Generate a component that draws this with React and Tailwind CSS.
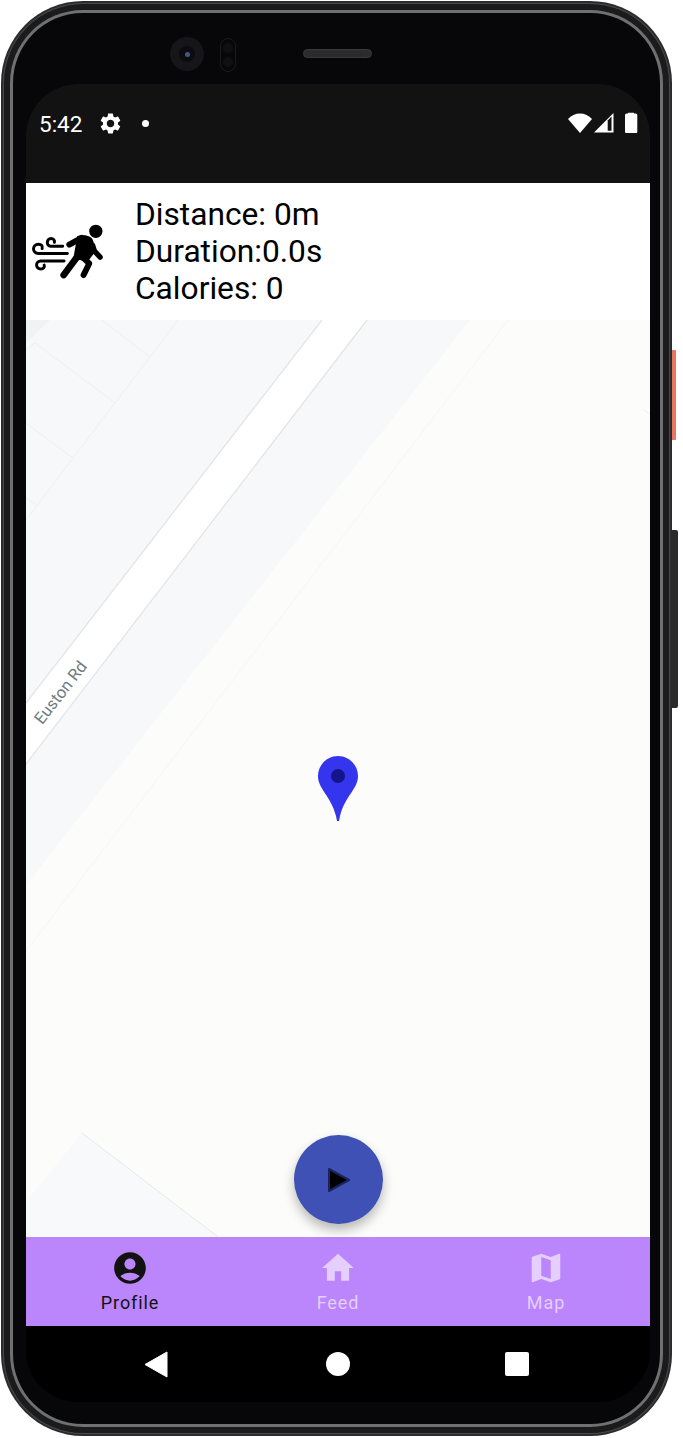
import React from 'react';
import { MdAccountCircle, MdHome, MdMap, MdSettings } from 'react-icons/md';

const navItems = [
  { label: 'Profile', Icon: MdAccountCircle, active: true },
  { label: 'Feed', Icon: MdHome },
  { label: 'Map', Icon: MdMap },
];

const RunnerIcon = () => (
  <svg width="75" height="58" viewBox="30 80 225 175" className="block text-black">
    <circle cx="228" cy="108" r="20" fill="currentColor" />
    {/* body */}
    <path d="M148 148 L185 128" fill="none" stroke="currentColor" strokeWidth="18" strokeLinecap="round" />
    <path d="M172 122 C197 116 218 122 221 140 L226 170 L203 200 L160 190 Z" fill="currentColor" />
    <path d="M218 150 L224 168 L241 186" fill="none" stroke="currentColor" strokeWidth="16" strokeLinecap="round" strokeLinejoin="round" />
    <path d="M172 185 L131 240" fill="none" stroke="currentColor" strokeWidth="20" strokeLinecap="round" />
    <path d="M187 185 L208 205 L191 240" fill="none" stroke="currentColor" strokeWidth="18" strokeLinecap="round" strokeLinejoin="round" />
    {/* wind */}
    <path d="M128 153 H92 C78 153 78 130 93 130 C100 130 105 135 103 141" fill="none" stroke="currentColor" strokeWidth="9" strokeLinecap="round" />
    <path d="M142 175 H55 C35 175 35 147 55 147 C63 147 68 152 66 160" fill="none" stroke="currentColor" strokeWidth="9" strokeLinecap="round" />
    <path d="M132 198 H62 C45 198 45 222 62 222 C70 222 74 216 72 210" fill="none" stroke="currentColor" strokeWidth="9" strokeLinecap="round" />
  </svg>
);

const MapLayer = () => (
  <svg width="624" height="917" viewBox="0 0 624 917" className="block">
    <rect width="624" height="917" fill="#fcfcfa" />
    {/* city block along the road */}
    <polygon points="0,0 444,0 0,565" fill="#f7f8fa" />
    <polygon points="0,0 24,0 0,23" fill="#f1f2f4" />
    <polygon points="296,0 341,0 0,444 0,383" fill="#ffffff" />
    <line x1="296" y1="0" x2="0" y2="383" stroke="#e3e4e6" strokeWidth="1.3" />
    <line x1="341" y1="0" x2="0" y2="444" stroke="#e3e4e6" strokeWidth="1.3" />
    <line x1="482" y1="0" x2="0" y2="631" stroke="#f6f6f1" strokeWidth="1" />
    {/* building outlines */}
    <g stroke="#eceded" strokeWidth="0.8">
      <line x1="152" y1="0" x2="0" y2="200" />
      <line x1="76" y1="0" x2="124" y2="37" />
      <line x1="9" y1="23" x2="89" y2="83" />
      <line x1="0" y1="103" x2="47" y2="138" />
      <line x1="0" y1="178" x2="11" y2="185" />
      <line x1="0" y1="30" x2="9" y2="23" />
      <line x1="618" y1="90" x2="624" y2="94" />
    </g>
    <polygon points="56,813 0,882 0,917 192,917" fill="#f8f9fb" />
    <line x1="56" y1="813" x2="192" y2="917" stroke="#e2e3e3" strokeWidth="0.8" />
    <text
      x="39"
      y="376"
      textAnchor="middle"
      transform="rotate(-52 39 376)"
      fill="#6f7a82"
      fontSize="16.5"
      fontFamily="Roboto, sans-serif"
    >
      Euston Rd
    </text>
  </svg>
);

const StatusBar = () => (
  <div className="h-[99px] shrink-0 bg-[#121212] pt-[26px] pl-[13px] pr-[12px] flex items-start justify-between text-white">
    <div className="flex items-center h-[26px]">
      <span className="text-[22.5px] leading-[26px] w-[59px] translate-y-[1px]">5:42</span>
      <MdSettings size={25} className="-ml-[0.5px]" />
      <span className="ml-[19px] w-[7px] h-[7px] rounded-full bg-white" />
    </div>
    <div className="flex items-center h-[26px]">
      <svg width="76" height="24" viewBox="0 0 76 24">
        <path d="M6 8 C12 0.500 24 0.500 30 8 L18 22 Z" fill="#fff" />
        <path d="M51.500 2 V21.500 H32 Z" fill="#fff" />
        <path d="M45.700 9.500 L49.500 5.500 V19.700 H45.700 Z" fill="#121212" />
        <path d="M63 4 a1.500 1.500 0 0 1 1.500 -1.500 H66 V1.700 H72 V2.500 H73.800 a1.500 1.500 0 0 1 1.500 1.500 V21 a1 1 0 0 1 -1 1 H64 a1 1 0 0 1 -1 -1 Z" fill="#fff" />
      </svg>
    </div>
  </div>
);

export default function App() {
  return (
    <div className="relative w-[683px] h-[1438px] bg-white overflow-hidden" style={{ fontFamily: 'Roboto, sans-serif' }}>
      {/* side buttons */}
      <div className="absolute left-[670px] top-[350px] w-[6px] h-[90px] bg-[#e8775f] rounded-r-[1px]" />
      <div className="absolute left-[670px] top-[530px] w-[8px] h-[178px] bg-[#2a2a2a] rounded-r-[2px]" />

      {/* phone body */}
      <div className="relative ml-[1px] mt-[1px] w-[671px] h-[1435px] rounded-[82px] bg-[#2c2c2e] p-[2px]">
        <div className="w-full h-full rounded-[80px] bg-[#4a4a4c] p-[1px]">
          <div className="w-full h-full rounded-[79px] bg-[#1b1b1c] p-[6px]">
            <div className="w-full h-full rounded-[73px] bg-[#6f7072] p-[3px]">
              <div className="relative w-full h-full rounded-[70px] bg-[#070709] pt-[71px] px-[13px]">
                {/* camera, sensor and speaker */}
                <div className="absolute left-[157px] top-[24px] w-[34px] h-[34px] rounded-full bg-[#15151a] flex items-center justify-center">
                  <div className="w-[16px] h-[16px] rounded-full bg-[#0b0b10] flex items-center justify-center">
                    <div className="w-[5px] h-[5px] rounded-full bg-[#46568a]" />
                  </div>
                </div>
                <div className="absolute left-[207px] top-[25px] w-[16px] h-[34px] rounded-full border border-[#1b1b1e] flex flex-col items-center justify-around py-[2px]">
                  <div className="w-[10px] h-[10px] rounded-full bg-[#101014]" />
                  <div className="w-[10px] h-[10px] rounded-full bg-[#101014]" />
                </div>
                <div className="absolute left-[290px] top-[36px] w-[69px] h-[9px] rounded-full bg-[#2b2b2d] border border-[#3a3a3c]" />

                {/* screen */}
                <div className="w-[624px] h-[1318px] rounded-[52px] overflow-hidden flex flex-col bg-black">
                  <StatusBar />

                  <div className="h-[137px] shrink-0 bg-white flex items-center">
                    <div className="w-[110px] pl-[4px] pb-[1px] shrink-0">
                      <RunnerIcon />
                    </div>
                    <div className="text-[31.7px] leading-[37px] text-black -ml-[1px]">
                      <div>Distance: 0m</div>
                      <div>Duration:0.0s</div>
                      <div>Calories: 0</div>
                    </div>
                  </div>

                  <div className="relative h-[917px] shrink-0">
                    <MapLayer />
                    {/* location pin */}
                    <svg width="42" height="66" viewBox="0 0 42 66" className="absolute left-[291px] top-[436px]">
                      <path d="M21 0 C10 0 1 9 1 20 C1 33 14 40 19 60 L20 65 H22 L23 60 C28 40 41 33 41 20 C41 9 32 0 21 0 Z" fill="#3535ee" />
                      <circle cx="21" cy="20" r="7" fill="#14148c" />
                    </svg>
                    {/* start button */}
                    <button className="absolute left-[267.500px] top-[815px] w-[89px] h-[89px] rounded-full bg-[#3f51b5] shadow-[0_6px_12px_rgba(0,0,0,0.28)] flex items-center justify-center">
                      <svg width="26" height="28" viewBox="0 0 26 28" className="ml-[1px]">
                        <path d="M3 3 L23 14 L3 25 Z" fill="#000" stroke="#1a2360" strokeWidth="2" strokeLinejoin="round" />
                      </svg>
                    </button>
                  </div>

                  <div className="h-[89px] shrink-0 bg-[#bb86fc] flex">
                    {navItems.map(({ label, Icon, active }) => (
                      <div
                        key={label}
                        className={`flex-1 flex flex-col items-center pt-[12px] ${active ? 'text-[#121212]' : 'text-[#e4cffe]'}`}
                      >
                        <Icon size={38} />
                        <span className="text-[18px] leading-[24px] tracking-[0.9px] mt-[4px]">{label}</span>
                      </div>
                    ))}
                  </div>

                  <div className="flex-1 bg-black flex items-start pt-[25px]">
                    <div className="w-[208px] flex justify-center pl-[52px]">
                      <svg width="24" height="27" viewBox="0 0 24 27">
                        <path d="M23 1 V26 L1 13.500 Z" fill="#fff" stroke="#fff" strokeWidth="1" strokeLinejoin="round" />
                      </svg>
                    </div>
                    <div className="w-[208px] flex justify-center">
                      <span className="w-[24px] h-[24px] rounded-full bg-white mt-[1px]" />
                    </div>
                    <div className="w-[208px] flex justify-center pt-[1px] pr-[58px]">
                      <span className="w-[24px] h-[24px] rounded-[2px] bg-white" />
                    </div>
                  </div>
                </div>
              </div>
            </div>
          </div>
        </div>
      </div>
    </div>
  );
}
